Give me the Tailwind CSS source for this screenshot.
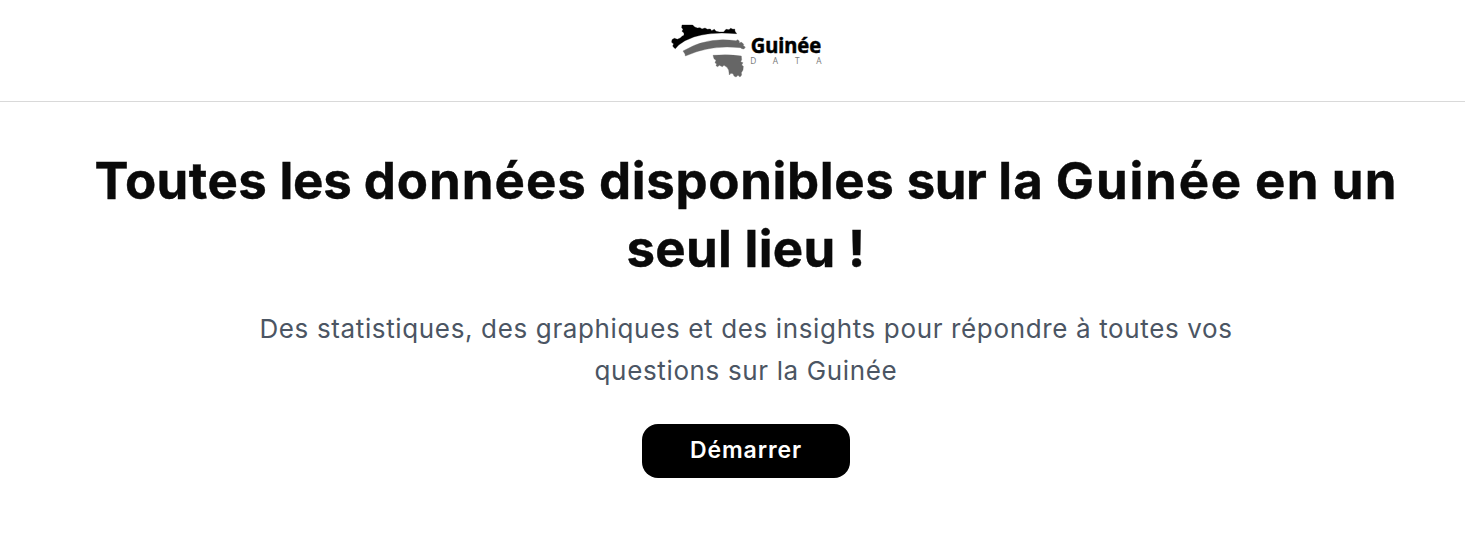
<!DOCTYPE html>
<html lang="fr">
<head>
<meta charset="utf-8">
<title>Guinée Data</title>
<script src="https://cdn.jsdelivr.net/npm/@tailwindcss/browser@4"></script>
</head>
<body class="bg-white font-['Inter',sans-serif] min-h-[538px] overflow-hidden">
<header class="h-[102px] border-b border-[#d9d9d9] pl-[27px] pt-6 flex justify-center">
  <svg class="w-[151px] h-[53px] overflow-visible" viewBox="33 27 453 159" role="img" aria-label="Guinée Data">
    <path fill="#000" stroke="#000" stroke-width="1" d="M66 30H98L104 36L112 39L120 38L126 42L135 39L142 43L151 42L155 47L163 43L168 49L178 51L191 51L198 43L207 44L212 40L219 43L224 42L225 49L230 56Q130 47 75 77L56 90L46 101L43 99L38 93L41 87L35 82L36 74L43 70L52 73L61 69L66 64L72 61V54L66 49L69 43L65 38Z"/>
    <path fill="#666" stroke="#666" d="M69 108Q142 64 228 77L233 74L238 78L237 83L245 82L251 88L250 92L256 96L252 102L246 101L241 98Q153 88 76 123L75 117ZM159 121Q205 117 244 123L245 134L242 140L249 143L245 150L250 154L249 165L244 173L245 180L240 186L234 181L228 186L222 183L219 176L213 175L208 180L206 165L201 157L192 151L187 155L178 151L173 155L168 152L170 147L165 143L168 136L162 131Z"/>
    <text x="272" y="113" textLength="212" lengthAdjust="spacingAndGlyphs" font-family="Noto Sans" font-weight="700" font-size="63" fill="#000" stroke="#000" stroke-width="1.5">Guinée</text>
    <g font-family="Open Sans" font-size="25" fill="#777"><text x="271" y="147">D</text><text x="338" y="147">A</text><text x="405" y="147">T</text><text x="469" y="147">A</text></g>
  </svg>
</header>
<main class="pl-[27px] pt-[45px] flex flex-col items-center text-center whitespace-nowrap">
  <h1 class="text-[51px] leading-[68px] font-bold text-[#0a0a0a] [-webkit-text-stroke:0.4px_#0a0a0a]"><span class="tracking-[0.45px]">Toutes</span> <span class="tracking-[-0.2px]">les</span> <span class="tracking-[1px]">données</span> <span class="tracking-[0.65px]">disponibles</span> <span class="tracking-[-0.5px]">sur</span> <span class="tracking-[1px]">la</span> <span class="tracking-[1.8px]">Guinée</span> <span class="tracking-[1.2px]">en</span> <span class="tracking-[1.2px]">un</span><br><span class="tracking-[0.3px]">seul lieu !</span></h1>
  <p class="mt-[25px] text-[26px] leading-[42px] text-[#4b5563] tracking-[0.64px]"><span>Des statistiques, des graphiques et des insights pour répondre à toutes vos</span><br><span>questions sur la Guinée</span></p>
  <a href="#" class="mt-[32px] w-[208px] h-[54px] pb-0.5 rounded-2xl bg-black text-white text-[23px] tracking-[0.9px] font-semibold flex items-center justify-center"><span>Démarrer</span></a>
</main>
</body>
</html>
